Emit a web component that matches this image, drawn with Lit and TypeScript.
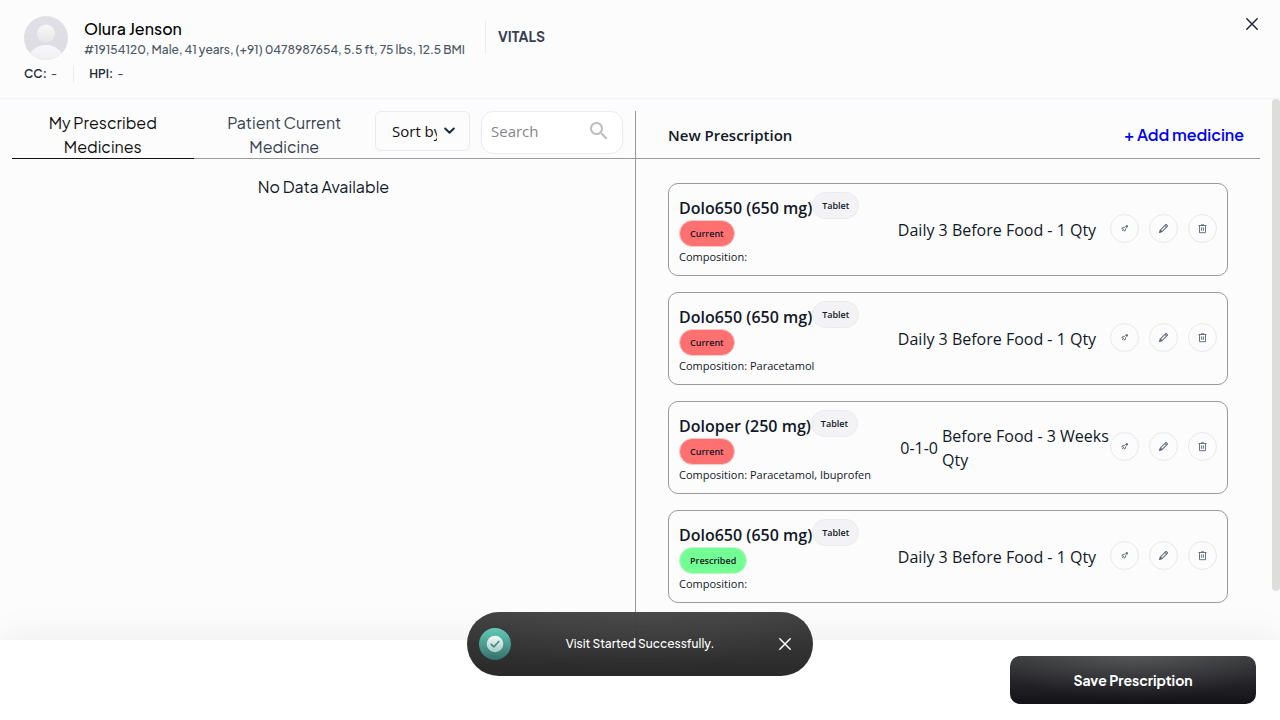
import { LitElement, html, css } from "lit";
import { customElement, state } from "lit/decorators.js";
import { classMap } from "lit/directives/class-map.js";

interface Medicine {
  name: string;
  form: string;
  status: "Current" | "Prescribed";
  composition: string;
  schedule?: string;
  note: string;
}

const MEDICINES: Medicine[] = [
  { name: "Dolo650 (650 mg)", form: "Tablet", status: "Current", composition: "", note: "Daily 3 Before Food - 1 Qty" },
  { name: "Dolo650 (650 mg)", form: "Tablet", status: "Current", composition: "Paracetamol", note: "Daily 3 Before Food - 1 Qty" },
  { name: "Doloper (250 mg)", form: "Tablet", status: "Current", composition: "Paracetamol, Ibuprofen", schedule: "0-1-0", note: "Before Food - 3 Weeks Qty" },
  { name: "Dolo650 (650 mg)", form: "Tablet", status: "Prescribed", composition: "", note: "Daily 3 Before Food - 1 Qty" },
];

const TABS = ["My Prescribed Medicines", "Patient Current Medicine"];

const crossIcon = html`<svg width="12" height="12" viewBox="0 0 12 12" fill="none" stroke="currentColor" stroke-width="1.5" stroke-linecap="round" aria-hidden="true"><path d="M.8.8l10.4 10.4M11.2.8L.8 11.2" /></svg>`;

const pinIcon = html`<svg width="7" height="7" viewBox="0 0 7 7" fill="none" stroke="#4b5563" stroke-width=".8" aria-hidden="true"><path d="M6.2.8L4.4 1.5 3.4 2.4H2L.7 3.6l1.5.4M6.2.8L5.6 2.6 4.6 3.6V5L3.4 6.3 3 4.8M2.2 4L3 4.8M2.4 4.6L1 6" /><path d="M4.7.6h1.9v1.9z" fill="#374151" stroke="none" /></svg>`;

const pencilIcon = html`<svg width="9" height="9" viewBox="0 0 16 16" fill="#5b6474" stroke="#5b6474" stroke-width=".9" aria-hidden="true"><path d="M12.146.146a.5.5 0 0 1 .708 0l3 3a.5.5 0 0 1 0 .708l-10 10a.5.5 0 0 1-.168.11l-5 2a.5.5 0 0 1-.65-.65l2-5a.5.5 0 0 1 .11-.168zM11.207 2.5 13.5 4.793 14.793 3.5 12.5 1.207zm1.586 3L10.5 3.207 3 10.707V11h.5a.5.5 0 0 1 .5.5v.5h.5a.5.5 0 0 1 .5.5v.5h.293z" /></svg>`;

const trashIcon = html`<svg width="9" height="10" viewBox="0 0 9 10" fill="none" stroke="#6b7280" aria-hidden="true"><path d="M.5 1.5h8M3 .8h3M1.5 1.5v7.2h6V1.5M3.6 3.4v3.4M5.4 3.4v3.4" /></svg>`;

@customElement("app-root")
export class AppRoot extends LitElement {
  @state() private tab = 0;
  @state() private toastOpen = true;

  static styles = css`
    :host {
      display: flex;
      flex-direction: column;
      height: 100vh;
      overflow: hidden;
      position: relative;
      background: #fcfcfc;
      color: #111827;
      font: 400 16px/24px "Plus Jakarta Sans", Inter, sans-serif;
    }
    * { box-sizing: border-box; }
    button { font: inherit; color: inherit; background: none; border: 0; padding: 0; cursor: pointer; }
    svg { display: block; flex: none; }
    h1, h2, p { margin: 0; }

    .header {
      display: flex;
      align-items: flex-start;
      padding: 16px 20px 15px 24px;
      border-bottom: 1px solid #f2f2fa;
    }
    .identity { display: flex; gap: 16px; }
    .who { padding-top: 3px; }
    .patient-name { font-size: 16px; line-height: 20px; font-weight: 500; color: #000; }
    .patient-info { font-size: 12px; line-height: 22px; font-weight: 500; color: #4b5563; white-space: nowrap; }
    .complaints { display: flex; align-items: center; margin-top: 4px; font-size: 12px; line-height: 18px; font-weight: 600; color: #1f2937; }
    .complaints p { display: flex; gap: 4px; }
    .complaints span { font-weight: 500; color: #4b5563; }
    .complaints p + p { margin-left: 16px; padding-left: 15px; border-left: 1px solid #ececef; }
    .vitals {
      margin: 5px 0 0 20px;
      padding: 0 0 2px 12px;
      border-left: 1px solid #ececef;
      font-size: 14px;
      line-height: 31px;
      font-weight: 700;
      color: #374151;
    }
    .close { margin: 0 0 0 auto; padding: 2px; color: #1f2937; }

    .body { flex: 1; min-height: 0; display: flex; align-items: flex-start; overflow: hidden; }
    .columns {
      flex: 1;
      align-self: stretch;
      display: grid;
      grid-template-columns: 1fr 1fr;
      padding: 12px 12px 0;
    }
    .thumb { width: 8px; height: 91%; border-radius: 4px; background: #dddddb; }

    .history { border-right: 1px solid #999; min-width: 0; }
    .bar { display: flex; height: 48px; border-bottom: 1px solid #999; }
    .tab { flex: 1; min-width: 0; height: 48px; padding: 0 16px; color: #374151; border-bottom: 1px solid transparent; }
    .tab.active { color: #111; border-bottom-color: #111; }
    .sort { position: relative; width: 95px; height: 40px; flex: none; }
    .sort select {
      appearance: none;
      width: 100%;
      height: 100%;
      padding: 0 32px 0 16px;
      border: 1px solid #e8eaf3;
      border-radius: 6px;
      background: transparent;
      color: #111;
      font: 400 15px/24px "Segoe UI", "Open Sans", sans-serif;
      text-overflow: clip;
    }
    .sort svg { position: absolute; right: 15px; top: 16px; pointer-events: none; }
    .search {
      display: flex;
      align-items: center;
      width: 142px;
      height: 43px;
      flex: none;
      margin: 0 12px 0 11px;
      padding: 0 11px 4px 9px;
      border: 1px solid #e8eaf6;
      border-radius: 12px;
      background: #fff;
    }
    .search input {
      flex: 1;
      min-width: 0;
      border: 0;
      padding: 0;
      outline: 0;
      background: none;
      font: 400 15px/24px "Segoe UI", "Open Sans", sans-serif;
    }
    .search input::placeholder { color: #85858a; }
    .empty { padding-top: 16px; text-align: center; }

    .current { min-width: 0; }
    .current .bar { align-items: center; justify-content: space-between; padding: 0 16px 0 32px; }
    .title { font: 600 15px/24px "Segoe UI", "Open Sans", sans-serif; }
    .add { font-weight: 600; color: #0000f5; }
    .list {
      list-style: none;
      margin: 0;
      padding: 24px 32px;
      display: grid;
      gap: 16px;
      font-family: "Segoe UI", "Open Sans", sans-serif;
    }
    .card {
      display: flex;
      align-items: center;
      height: 93px;
      padding: 0 10px 2px;
      border: 1px solid #999;
      border-radius: 10px;
    }
    .drug { flex: 1; min-width: 0; }
    .drug-line { display: flex; align-items: center; }
    .drug-name { font-size: 16px; line-height: 24px; font-weight: 600; padding-top: 4px; white-space: nowrap; }
    .pill {
      display: inline-block;
      padding: 0 9px;
      border: 1px solid #ebebee;
      border-radius: 14px;
      background: #f3f3f6;
      font-size: 9px;
      line-height: 25px;
      font-weight: 600;
    }
    .pill.status { display: block; width: max-content; padding: 0 10px; }
    .pill.red { background: #ff7070; border-color: #f3c9c9; }
    .pill.green { background: #73ff93; border-color: #c5efce; }
    .composition { font-size: 11px; line-height: 19px; white-space: nowrap; }
    .dose { flex: 0 0 226px; display: flex; align-items: center; justify-content: center; gap: 4px; padding-top: 2px; }
    .dose.timed { justify-content: flex-end; }
    .dose.timed .note { max-width: 168px; }
    .actions { display: flex; gap: 10px; }
    .round {
      display: grid;
      place-items: center;
      width: 29px;
      height: 29px;
      border: 1px solid #e8e8ea;
      border-radius: 50%;
    }

    .footer {
      display: flex;
      justify-content: flex-end;
      padding: 16px 24px;
      background: #fff;
      box-shadow: 0 0 40px rgba(0, 0, 0, 0.07);
      position: relative;
    }
    .save {
      width: 246px;
      height: 48px;
      border-radius: 10px;
      color: #fff;
      font-size: 14px;
      font-weight: 700;
      background: radial-gradient(60% 90% at 50% 0, rgba(255, 255, 255, 0.14), transparent), linear-gradient(#3a3b3d, #121217);
    }

    .toast {
      position: absolute;
      left: 50%;
      bottom: 44px;
      transform: translateX(-50%);
      display: flex;
      align-items: center;
      justify-content: space-between;
      width: 346px;
      height: 64px;
      padding: 0 20px 0 12px;
      border-radius: 32px;
      color: #fff;
      font-size: 12px;
      font-weight: 500;
      background: radial-gradient(60% 90% at 50% 0, rgba(255, 255, 255, 0.06), transparent), linear-gradient(rgba(52, 52, 52, 0.94), rgba(38, 38, 38, 0.99));
    }
    .toast span { padding-right: 8px; }
    .toast button { padding: 2px; }
  `;

  private renderCard(m: Medicine) {
    return html`<li class="card">
      <div class="drug">
        <div class="drug-line"><span class="drug-name">${m.name}</span><span class="pill">${m.form}</span></div>
        <span class=${classMap({ pill: true, status: true, red: m.status === "Current", green: m.status === "Prescribed" })}>${m.status}</span>
        <p class="composition">Composition: ${m.composition}</p>
      </div>
      <div class=${classMap({ dose: true, timed: !!m.schedule })}>
        ${m.schedule ? html`<span>${m.schedule}</span>` : ""}<span class="note">${m.note}</span>
      </div>
      <div class="actions">
        <button class="round" aria-label="Pin">${pinIcon}</button>
        <button class="round" aria-label="Edit">${pencilIcon}</button>
        <button class="round" aria-label="Delete">${trashIcon}</button>
      </div>
    </li>`;
  }

  render() {
    return html`
      <header class="header">
        <div>
          <div class="identity">
            <svg width="44" height="44" viewBox="0 0 44 44" role="img" aria-label="Patient">
              <defs>
                <linearGradient id="disc" x2="0" y2="1"><stop stop-color="#e0e0e6" /><stop offset="1" stop-color="#dcdce2" /></linearGradient>
                <linearGradient id="person" x2="0" y2="1"><stop stop-color="#f8f8f9" /><stop offset="1" stop-color="#e6e6ea" /></linearGradient>
                <clipPath id="round"><circle cx="22" cy="22" r="22" /></clipPath>
              </defs>
              <g clip-path="url(#round)">
                <rect width="44" height="44" fill="url(#disc)" />
                <circle cx="22" cy="17.5" r="9" fill="url(#person)" />
                <ellipse cx="22" cy="44" rx="18" ry="15" fill="url(#person)" />
              </g>
            </svg>
            <div class="who">
              <h1 class="patient-name">Olura Jenson</h1>
              <p class="patient-info">#19154120, Male, 41 years, (+91) 0478987654, 5.5 ft, 75 lbs, 12.5 BMI</p>
            </div>
          </div>
          <div class="complaints"><p>CC: <span>-</span></p><p>HPI: <span>-</span></p></div>
        </div>
        <h2 class="vitals">VITALS</h2>
        <button class="close" aria-label="Close">${crossIcon}</button>
      </header>

      <main class="body">
        <div class="columns">
          <section class="history">
            <div class="bar">
              ${TABS.map((t, i) => html`<button class=${classMap({ tab: true, active: this.tab === i })} @click=${() => (this.tab = i)}>${t}</button>`)}
              <div class="sort">
                <select aria-label="Sort by"><option>Sort by</option></select>
                <svg width="11" height="8" viewBox="0 0 11 8" fill="none" stroke="#1f2937" stroke-width="2" stroke-linecap="round" stroke-linejoin="round" aria-hidden="true"><path d="M1.2 1.5l4.3 4.3 4.3-4.3" /></svg>
              </div>
              <label class="search">
                <input type="text" placeholder="Search" aria-label="Search" />
                <svg width="24" height="24" viewBox="0 0 24 24" fill="#bdbdbf" aria-hidden="true"><path d="M15.5 14h-.79l-.28-.27C15.41 12.59 16 11.11 16 9.5 16 5.91 13.09 3 9.5 3S3 5.91 3 9.5 5.91 16 9.5 16c1.61 0 3.09-.59 4.23-1.57l.27.28v.79l5 4.99L20.49 19l-4.99-5zm-6 0C7.01 14 5 11.99 5 9.5S7.01 5 9.5 5 14 7.01 14 9.5 11.99 14 9.5 14z" /></svg>
              </label>
            </div>
            <p class="empty">No Data Available</p>
          </section>
          <section class="current">
            <div class="bar"><h2 class="title">New Prescription</h2><button class="add">+ Add medicine</button></div>
            <ul class="list">${MEDICINES.map((m) => this.renderCard(m))}</ul>
          </section>
        </div>
        <div class="thumb"></div>
      </main>

      <footer class="footer"><button class="save">Save Prescription</button></footer>

      ${this.toastOpen
        ? html`<div class="toast" role="status">
            <svg width="32" height="32" viewBox="0 0 32 32" aria-hidden="true">
              <defs>
                <linearGradient id="teal" x2="0" y2="1"><stop stop-color="#62cbb8" /><stop offset="1" stop-color="#35706a" /></linearGradient>
                <linearGradient id="badge" x2="0" y2="1"><stop stop-color="#f3fbf9" /><stop offset="1" stop-color="#a9cbc6" /></linearGradient>
              </defs>
              <circle cx="16" cy="16" r="16" fill="url(#teal)" />
              <circle cx="16" cy="16" r="8.3" fill="url(#badge)" />
              <path d="M12.2 16.3l2.6 2.6 5-5.4" fill="none" stroke="#459387" stroke-width="1.8" stroke-linecap="round" stroke-linejoin="round" />
            </svg>
            <span>Visit Started Successfully.</span>
            <button aria-label="Dismiss" @click=${() => (this.toastOpen = false)}>${crossIcon}</button>
          </div>`
        : ""}
    `;
  }
}
